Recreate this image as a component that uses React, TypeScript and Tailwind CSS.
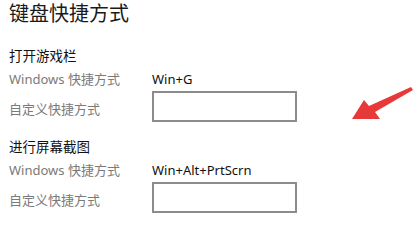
export default function App() {
  const font = { fontFamily: '"Noto Sans", "Noto Sans CJK SC", sans-serif' };

  const Section = ({ title, shortcut }: { title: string; shortcut: string }) => (
    <div className="flex flex-col">
      <div className="h-[22px] flex items-center text-[13.5px] text-[#111]">{title}</div>
      <div className="h-[24px] flex items-center pt-[1px]">
        <div className="w-[143px] text-[13px] text-[#7a7a7a]">Windows 快捷方式</div>
        <div className="text-[13px] text-[#111]">{shortcut}</div>
      </div>
      <div className="flex items-start">
        <div className="w-[143px] mt-[9px] h-[20px] flex items-center text-[13px] text-[#7a7a7a]">
          自定义快捷方式
        </div>
        <div className="w-[145px] h-[31px] border-2 border-[#8c8c8c] bg-white" />
      </div>
    </div>
  );

  return (
    <div className="relative w-[416px] h-[225px] bg-white overflow-hidden pl-[9px]" style={font}>
      <div className="h-[28px] flex items-center text-[20px] text-[#1a1a1a]">键盘快捷方式</div>
      <div className="mt-[17px]">
        <Section title="打开游戏栏" shortcut="Win+G" />
      </div>
      <div className="mt-[14px]">
        <Section title="进行屏幕截图" shortcut="Win+Alt+PrtScrn" />
      </div>

      {/* red annotation arrow */}
      <svg className="absolute left-0 top-0" width="416" height="225" viewBox="0 0 416 225">
        <polygon
          points="352,119 364,100 369,106 411,87 413,90 375,112 380,119"
          fill="#e8393a"
        />
      </svg>
    </div>
  );
}
